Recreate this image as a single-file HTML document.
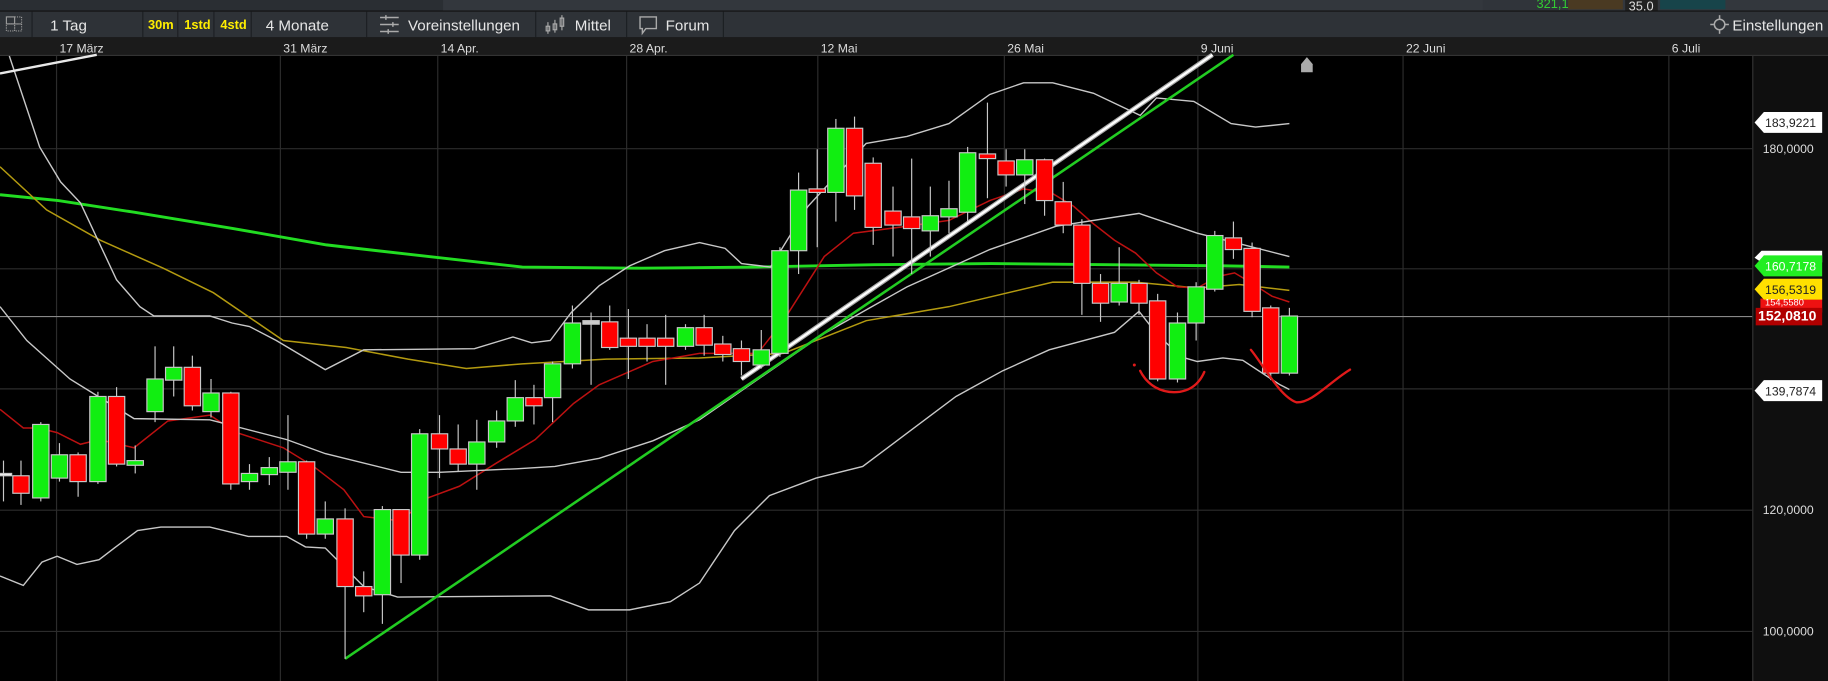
<!DOCTYPE html>
<html><head><meta charset="utf-8"><style>
html,body{margin:0;padding:0;background:#000;width:1828px;height:681px;overflow:hidden}
svg{display:block}
text{font-family:"Liberation Sans",Arial,sans-serif}
</style></head><body>
<svg width="1828" height="681" viewBox="0 0 1568 584" preserveAspectRatio="none" xmlns="http://www.w3.org/2000/svg">
<rect width="1568" height="584" fill="#000"/>
<!-- top strip -->
<rect x="0" y="0" width="1568" height="9" fill="#33373d"/>
<rect x="0" y="0" width="380" height="9" fill="#2a2e33"/>
<rect x="1272" y="0" width="73" height="9" fill="#30343a"/>
<text x="1318" y="7" fill="#33cc33" font-size="11">321,1</text>
<rect x="1345" y="0" width="47" height="8" fill="#4a3a22"/>
<rect x="1394" y="0" width="28" height="9" fill="#222"/>
<text x="1397" y="9" fill="#ddd" font-size="11">35,0</text>
<rect x="1424" y="0" width="56" height="8" fill="#17444a"/>
<!-- toolbar -->
<rect x="0" y="9" width="1568" height="23" fill="#2e3237"/>
<line x1="0" y1="9.5" x2="1568" y2="9.5" stroke="#111"/>
<g stroke="#1c1f23" stroke-width="1">
<line x1="27.5" y1="10" x2="27.5" y2="32"/><line x1="122.5" y1="10" x2="122.5" y2="32"/>
<line x1="152.5" y1="10" x2="152.5" y2="32"/><line x1="183.5" y1="10" x2="183.5" y2="32"/>
<line x1="215.5" y1="10" x2="215.5" y2="32"/><line x1="314.5" y1="10" x2="314.5" y2="32"/>
<line x1="459.5" y1="10" x2="459.5" y2="32"/><line x1="537.5" y1="10" x2="537.5" y2="32"/>
<line x1="620.5" y1="10" x2="620.5" y2="32"/>
</g>
<g stroke="#999" fill="none" stroke-width="1">
<rect x="5.5" y="14.5" width="7" height="6"/><rect x="12.5" y="14.5" width="6" height="6" stroke-dasharray="1,1"/>
<rect x="5.5" y="20.5" width="7" height="6" stroke-dasharray="1,1"/><rect x="12.5" y="20.5" width="6" height="6" stroke-dasharray="1,1"/>
</g>
<text x="43" y="26" fill="#e6e6e6" font-size="13">1 Tag</text>
<text x="127" y="25" fill="#ffee00" font-size="11" font-weight="bold">30m</text>
<text x="158" y="25" fill="#ffee00" font-size="11" font-weight="bold">1std</text>
<text x="189" y="25" fill="#ffee00" font-size="11" font-weight="bold">4std</text>
<text x="228" y="26" fill="#e6e6e6" font-size="13">4 Monate</text>
<g stroke="#aaa" stroke-width="1.3">
<line x1="326" y1="15" x2="342" y2="15"/><line x1="326" y1="21" x2="342" y2="21"/><line x1="326" y1="27" x2="342" y2="27"/>
<line x1="331" y1="13" x2="331" y2="17"/><line x1="337" y1="19" x2="337" y2="23"/><line x1="333" y1="25" x2="333" y2="29"/>
</g>
<text x="350" y="26" fill="#e6e6e6" font-size="13">Voreinstellungen</text>
<g stroke="#aaa" stroke-width="1" fill="none">
<line x1="470" y1="19" x2="470" y2="29"/><rect x="468.5" y="22.5" width="3" height="4"/>
<line x1="476" y1="17" x2="476" y2="28"/><rect x="474.5" y="20.5" width="3" height="5"/>
<line x1="482" y1="13" x2="482" y2="26"/><rect x="480.5" y="15.5" width="3" height="7"/>
</g>
<text x="493" y="26" fill="#e6e6e6" font-size="13">Mittel</text>
<path d="M549 14.5h14v10h-9l-3 4v-4h-2z" fill="none" stroke="#aaa" stroke-width="1.2"/>
<text x="571" y="26" fill="#e6e6e6" font-size="13">Forum</text>
<g stroke="#aaa" fill="none" stroke-width="1.3">
<circle cx="1475" cy="21" r="4.5"/>
<line x1="1475" y1="13" x2="1475" y2="16"/><line x1="1475" y1="26" x2="1475" y2="29"/>
<line x1="1467" y1="21" x2="1470" y2="21"/><line x1="1480" y1="21" x2="1483" y2="21"/>
</g>
<text x="1486" y="26" fill="#e6e6e6" font-size="13">Einstellungen</text>
<!-- date row -->
<rect x="0" y="32" width="1568" height="15" fill="#1b1b1b"/>
<line x1="0" y1="47.5" x2="1568" y2="47.5" stroke="#333"/>
<g fill="#dcdcdc" font-size="10.5">
<text x="51" y="45">17 März</text><text x="243" y="45">31 März</text><text x="378" y="45">14 Apr.</text>
<text x="540" y="45">28 Apr.</text><text x="704" y="45">12 Mai</text><text x="864" y="45">26 Mai</text>
<text x="1030" y="45">9 Juni</text><text x="1206" y="45">22 Juni</text><text x="1434" y="45">6 Juli</text>
</g>
<!-- right axis -->
<rect x="1503" y="48" width="65" height="536" fill="#0f0f0f"/>
<line x1="1503.5" y1="48" x2="1503.5" y2="584" stroke="#333"/>
<!-- grid -->
<g stroke="#2c2c2c" stroke-width="1">
<line x1="48.5" y1="48" x2="48.5" y2="584"/><line x1="240.5" y1="48" x2="240.5" y2="584"/>
<line x1="375.5" y1="48" x2="375.5" y2="584"/><line x1="537.5" y1="48" x2="537.5" y2="584"/>
<line x1="701.5" y1="48" x2="701.5" y2="584"/><line x1="861.5" y1="48" x2="861.5" y2="584"/>
<line x1="1027.5" y1="48" x2="1027.5" y2="584"/><line x1="1203.5" y1="48" x2="1203.5" y2="584"/>
<line x1="1431.5" y1="48" x2="1431.5" y2="584"/>
<line x1="0" y1="127.5" x2="1503" y2="127.5"/><line x1="0" y1="230.5" x2="1503" y2="230.5"/>
<line x1="0" y1="333.5" x2="1503" y2="333.5"/><line x1="0" y1="437.5" x2="1503" y2="437.5"/>
<line x1="0" y1="541.5" x2="1503" y2="541.5"/>
</g>
<line x1="0" y1="271.5" x2="1503" y2="271.5" stroke="#888"/>
<g fill="#ddd" font-size="10.5">
<text x="1512" y="131">180,0000</text><text x="1512" y="441">120,0000</text><text x="1512" y="545">100,0000</text>
</g>
<!-- moving averages -->
<polyline fill="none" stroke="#22dd22" stroke-width="2.5" points="0,167 50,172 115,182 200,196 280,210 350,218 448,229 550,230 650,229 750,227 850,226 950,227 1050,228 1106,229"/>
<polyline fill="none" stroke="#b39a10" stroke-width="1.3" points="0,143 40,180 86,206 140,230 183,251 243,292 297,298 350,308 400,316 448,312 520,308 600,307 672,303 743,275 814,263 903,242 974,242 1027,247 1063,244 1106,249"/>
<polyline fill="none" stroke="#bb1111" stroke-width="1.3" points="0,351 20,367 33,367 49,371 69,381 85,377 98,380 115,384 144,361 180,356 203,371 243,384 269,400 295,420 312,443 338,446 348,443 367,427 394,417 426,397 459,377 492,346 514,330 560,310 600,303 650,303 672,275 707,220 732,200 778,194 814,189 849,172 878,162 903,166 921,177 938,192 956,206 974,217 992,234 1010,246 1027,247 1045,237 1059,234 1074,243 1091,254 1106,259"/>
<g fill="none" stroke="#c8c8c8" stroke-width="1.2">
<polyline points="8,48 34,126 52,156 69,174 100,240 120,263 132,271 180,271 199,277 214,280 237,292 279,317 312,300 407,299 440,289 456,294 472,292 490,268 514,245 540,228 570,215 600,208 622,213 636,226 661,229 693,177 743,123 778,117 814,106 849,81 878,71 903,71 938,80 978,99 992,84 1024,87 1056,106 1077,109 1106,106"/>
<polyline points="0,263 23,292 60,325 115,359 180,360 246,377 279,389 344,405 377,405 443,402 476,400 514,393 560,378 600,360 636,335 707,286 778,246 849,214 906,194 977,183 1027,200 1063,209 1106,220"/>
<polyline points="0,494 20,502 36,482 49,477 66,484 85,480 98,470 118,455 138,452 180,452 213,460 246,460 262,469 279,470 312,503 341,512 472,511 505,523 540,523 575,516 600,500 630,455 660,425 700,410 740,400 780,370 820,340 860,318 900,300 956,285 977,267 992,286 1013,306 1027,310 1049,307 1066,309 1098,330 1106,334"/>
</g>
<!-- trendlines -->
<line x1="0" y1="63" x2="83" y2="47" stroke="#e8e8e8" stroke-width="2"/>
<line x1="296" y1="565" x2="1058" y2="47" stroke="#22cc22" stroke-width="2.2"/>
<line x1="636" y1="325" x2="1040" y2="47" stroke="#aaa" stroke-width="4"/>
<line x1="636" y1="325" x2="1040" y2="47" stroke="#fff" stroke-width="2"/>
<path d="M1116 62v-7l5-6 5 6v7z" fill="#aaa"/>
<!-- candles -->
<g stroke="#c8c8c8" stroke-width="1">
<line x1="3" y1="395" x2="3" y2="430"/><rect x="-4" y="406" width="14" height="2" fill="#eee"/>
<line x1="18" y1="395" x2="18" y2="433"/><rect x="11" y="408" width="14" height="15" fill="#f00"/>
<line x1="35" y1="362" x2="35" y2="430"/><rect x="28" y="364" width="14" height="63" fill="#1e1"/>
<line x1="51" y1="380" x2="51" y2="413"/><rect x="44" y="390" width="14" height="20" fill="#1e1"/>
<line x1="67" y1="388" x2="67" y2="426"/><rect x="60" y="390" width="14" height="23" fill="#f00"/>
<line x1="84" y1="336" x2="84" y2="415"/><rect x="77" y="340" width="14" height="73" fill="#1e1"/>
<line x1="100" y1="332" x2="100" y2="400"/><rect x="93" y="340" width="14" height="58" fill="#f00"/>
<line x1="116" y1="382" x2="116" y2="406"/><rect x="109" y="395" width="14" height="4" fill="#1e1"/>
<line x1="133" y1="297" x2="133" y2="362"/><rect x="126" y="325" width="14" height="28" fill="#1e1"/>
<line x1="149" y1="297" x2="149" y2="340"/><rect x="142" y="315" width="14" height="11" fill="#1e1"/>
<line x1="165" y1="305" x2="165" y2="352"/><rect x="158" y="315" width="14" height="33" fill="#f00"/>
<line x1="181" y1="325" x2="181" y2="358"/><rect x="174" y="337" width="14" height="16" fill="#1e1"/>
<line x1="198" y1="336" x2="198" y2="420"/><rect x="191" y="337" width="14" height="78" fill="#f00"/>
<line x1="214" y1="398" x2="214" y2="420"/><rect x="207" y="406" width="14" height="7" fill="#1e1"/>
<line x1="231" y1="392" x2="231" y2="416"/><rect x="224" y="401" width="14" height="6" fill="#1e1"/>
<line x1="247" y1="356" x2="247" y2="420"/><rect x="240" y="396" width="14" height="9" fill="#1e1"/>
<line x1="263" y1="395" x2="263" y2="462"/><rect x="256" y="396" width="14" height="62" fill="#f00"/>
<line x1="279" y1="430" x2="279" y2="462"/><rect x="272" y="445" width="14" height="13" fill="#1e1"/>
<line x1="296" y1="436" x2="296" y2="565"/><rect x="289" y="445" width="14" height="58" fill="#f00"/>
<line x1="312" y1="490" x2="312" y2="525"/><rect x="305" y="503" width="14" height="8" fill="#f00"/>
<line x1="328" y1="434" x2="328" y2="535"/><rect x="321" y="437" width="14" height="73" fill="#1e1"/>
<line x1="344" y1="437" x2="344" y2="500"/><rect x="337" y="437" width="14" height="39" fill="#f00"/>
<line x1="360" y1="368" x2="360" y2="480"/><rect x="353" y="372" width="14" height="104" fill="#1e1"/>
<line x1="377" y1="356" x2="377" y2="410"/><rect x="370" y="372" width="14" height="13" fill="#f00"/>
<line x1="393" y1="364" x2="393" y2="404"/><rect x="386" y="385" width="14" height="13" fill="#f00"/>
<line x1="409" y1="360" x2="409" y2="420"/><rect x="402" y="379" width="14" height="19" fill="#1e1"/>
<line x1="426" y1="352" x2="426" y2="384"/><rect x="419" y="361" width="14" height="18" fill="#1e1"/>
<line x1="442" y1="326" x2="442" y2="366"/><rect x="435" y="341" width="14" height="20" fill="#1e1"/>
<line x1="458" y1="330" x2="458" y2="364"/><rect x="451" y="341" width="14" height="7" fill="#f00"/>
<line x1="474" y1="310" x2="474" y2="362"/><rect x="467" y="312" width="14" height="29" fill="#1e1"/>
<line x1="491" y1="262" x2="491" y2="316"/><rect x="484" y="277" width="14" height="35" fill="#1e1"/>
<line x1="507" y1="268" x2="507" y2="330"/><rect x="500" y="275" width="14" height="3" fill="#ccc"/>
<line x1="523" y1="262" x2="523" y2="300"/><rect x="516" y="276" width="14" height="22" fill="#f00"/>
<line x1="539" y1="265" x2="539" y2="325"/><rect x="532" y="290" width="14" height="7" fill="#f00"/>
<line x1="555" y1="278" x2="555" y2="310"/><rect x="548" y="290" width="14" height="7" fill="#f00"/>
<line x1="571" y1="270" x2="571" y2="330"/><rect x="564" y="290" width="14" height="7" fill="#f00"/>
<line x1="588" y1="278" x2="588" y2="300"/><rect x="581" y="281" width="14" height="16" fill="#1e1"/>
<line x1="604" y1="270" x2="604" y2="305"/><rect x="597" y="281" width="14" height="15" fill="#f00"/>
<line x1="620" y1="288" x2="620" y2="310"/><rect x="613" y="295" width="14" height="9" fill="#f00"/>
<line x1="636" y1="292" x2="636" y2="322"/><rect x="629" y="299" width="14" height="11" fill="#f00"/>
<line x1="653" y1="283" x2="653" y2="316"/><rect x="646" y="300" width="14" height="13" fill="#1e1"/>
<line x1="669" y1="212" x2="669" y2="306"/><rect x="662" y="215" width="14" height="88" fill="#1e1"/>
<line x1="685" y1="148" x2="685" y2="235"/><rect x="678" y="163" width="14" height="52" fill="#1e1"/>
<line x1="701" y1="128" x2="701" y2="212"/><rect x="694" y="162" width="14" height="3" fill="#f00"/>
<line x1="717" y1="102" x2="717" y2="190"/><rect x="710" y="110" width="14" height="55" fill="#1e1"/>
<line x1="733" y1="100" x2="733" y2="180"/><rect x="726" y="110" width="14" height="58" fill="#f00"/>
<line x1="749" y1="135" x2="749" y2="210"/><rect x="742" y="140" width="14" height="55" fill="#f00"/>
<line x1="766" y1="160" x2="766" y2="220"/><rect x="759" y="181" width="14" height="12" fill="#f00"/>
<line x1="782" y1="136" x2="782" y2="235"/><rect x="775" y="186" width="14" height="10" fill="#f00"/>
<line x1="798" y1="160" x2="798" y2="220"/><rect x="791" y="185" width="14" height="13" fill="#1e1"/>
<line x1="814" y1="155" x2="814" y2="200"/><rect x="807" y="179" width="14" height="7" fill="#1e1"/>
<line x1="830" y1="126" x2="830" y2="190"/><rect x="823" y="131" width="14" height="51" fill="#1e1"/>
<line x1="847" y1="88" x2="847" y2="170"/><rect x="840" y="132" width="14" height="4" fill="#f00"/>
<line x1="863" y1="128" x2="863" y2="160"/><rect x="856" y="138" width="14" height="12" fill="#f00"/>
<line x1="879" y1="128" x2="879" y2="175"/><rect x="872" y="137" width="14" height="13" fill="#1e1"/>
<line x1="896" y1="136" x2="896" y2="185"/><rect x="889" y="137" width="14" height="35" fill="#f00"/>
<line x1="912" y1="156" x2="912" y2="200"/><rect x="905" y="173" width="14" height="20" fill="#f00"/>
<line x1="928" y1="188" x2="928" y2="270"/><rect x="921" y="193" width="14" height="50" fill="#f00"/>
<line x1="944" y1="235" x2="944" y2="276"/><rect x="937" y="243" width="14" height="17" fill="#f00"/>
<line x1="960" y1="212" x2="960" y2="262"/><rect x="953" y="243" width="14" height="16" fill="#1e1"/>
<line x1="977" y1="240" x2="977" y2="270"/><rect x="970" y="243" width="14" height="17" fill="#f00"/>
<line x1="993" y1="252" x2="993" y2="327"/><rect x="986" y="258" width="14" height="67" fill="#f00"/>
<line x1="1010" y1="268" x2="1010" y2="328"/><rect x="1003" y="277" width="14" height="48" fill="#1e1"/>
<line x1="1026" y1="242" x2="1026" y2="292"/><rect x="1019" y="246" width="14" height="31" fill="#1e1"/>
<line x1="1042" y1="198" x2="1042" y2="250"/><rect x="1035" y="202" width="14" height="46" fill="#1e1"/>
<line x1="1058" y1="190" x2="1058" y2="222"/><rect x="1051" y="204" width="14" height="10" fill="#f00"/>
<line x1="1074" y1="208" x2="1074" y2="272"/><rect x="1067" y="213" width="14" height="54" fill="#f00"/>
<line x1="1090" y1="262" x2="1090" y2="326"/><rect x="1083" y="264" width="14" height="56" fill="#f00"/>
<line x1="1106" y1="264" x2="1106" y2="322"/><rect x="1099" y="271" width="14" height="49" fill="#1e1"/>
</g>
<!-- hand drawn -->
<g fill="none" stroke="#e01a1a" stroke-width="2" stroke-linecap="round">
<path d="M978 318 C984 330 996 338 1012 336 C1024 334 1030 326 1033 319"/>
<path d="M1073 300 C1085 315 1098 340 1112 345 C1125 346 1140 328 1158 317"/>
</g>
<circle cx="973" cy="313" r="1.3" fill="#e01a1a"/>
<!-- tags -->
<g font-size="10.5">
<path d="M1505 105 l8 -9 h50 v18 h-50z" fill="#fff"/><text x="1514" y="109" fill="#222">183,9221</text>
<path d="M1505 221 l6 -6 h52 v10 h-52z" fill="#fff"/>
<path d="M1505 228 l8 -9 h50 v18 h-50z" fill="#22ee22"/><text x="1514" y="232" fill="#fff">160,7178</text>
<rect x="1510" y="256" width="53" height="12" fill="#ee1111"/>
<path d="M1505 248 l8 -9 h50 v18 h-50z" fill="#ffe000"/><text x="1514" y="252" fill="#222">156,5319</text>
<text x="1514" y="262" fill="#fff" font-size="8">154,5580</text>
<rect x="1506" y="264" width="57" height="15" fill="#b00000"/><text x="1508" y="275" fill="#fff" font-weight="bold" font-size="12">152,0810</text>
<path d="M1505 335 l8 -9 h50 v18 h-50z" fill="#fff"/><text x="1514" y="339" fill="#222">139,7874</text>
</g>
</svg>
</body></html>
